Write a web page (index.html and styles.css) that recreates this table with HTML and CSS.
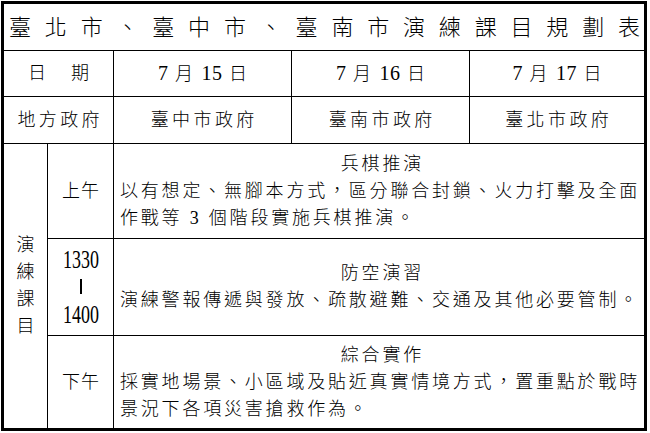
FILE: index.html
```html
<!DOCTYPE html>
<html lang="zh-Hant">
<head>
<meta charset="utf-8">
<title>臺北市、臺中市、臺南市演練課目規劃表</title>
<link rel="stylesheet" href="styles.css">
</head>
<body>
<div class="sheet">
  <div class="cell title span-all bb"><span class="title-text">臺北市、臺中市、臺南市演練課目規劃表</span></div>

  <div class="cell label span2 br bb">日　期</div>
  <div class="cell date br bb"><span><span class="num">7</span> 月 <span class="num">15</span> 日</span></div>
  <div class="cell date br bb"><span><span class="num">7</span> 月 <span class="num">16</span> 日</span></div>
  <div class="cell date bb"><span><span class="num">7</span> 月 <span class="num">17</span> 日</span></div>

  <div class="cell label span2 br bb">地方政府</div>
  <div class="cell label br bb">臺中市政府</div>
  <div class="cell label br bb">臺南市政府</div>
  <div class="cell label bb">臺北市政府</div>

  <div class="cell vert-cell br"><span class="vert">演練課目</span></div>

  <div class="cell time br bb">上午</div>
  <div class="cell content span3 bb">
    <p class="topic">兵棋推演</p>
    <p class="desc">以有想定、無腳本方式，區分聯合封鎖、火力打擊及全面作戰等 3 個階段實施兵棋推演。</p>
  </div>

  <div class="cell time br bb">
    <div class="clock">
      <span class="tall">1330</span>
      <span class="bar"></span>
      <span class="tall">1400</span>
    </div>
  </div>
  <div class="cell content span3 bb">
    <p class="topic">防空演習</p>
    <p class="desc">演練警報傳遞與發放、疏散避難、交通及其他必要管制。</p>
  </div>

  <div class="cell time br">下午</div>
  <div class="cell content span3">
    <p class="topic">綜合實作</p>
    <p class="desc">採實地場景、小區域及貼近真實情境方式，置重點於戰時景況下各項災害搶救作為。</p>
  </div>
</div>
</body>
</html>
```

FILE: styles.css
```css
* {
  box-sizing: border-box;
  margin: 0;
  padding: 0;
}

html, body {
  background: #fff;
}

body {
  margin: 1px 0 0 1px;
  font-family: "Liberation Serif", "Noto Sans CJK TC", serif;
  font-weight: 300;
  color: #000;
}

.sheet {
  width: 646px;
  height: 430px;
  border: 3px solid #000;
  display: grid;
  grid-template-columns: 44px 66px 178px 178px 174px;
  grid-template-rows: 47px 46px 47px 95px 97px 92px;
}

.cell {
  display: flex;
  align-items: center;
  justify-content: center;
  font-size: 18px;
  line-height: 27px;
}

.br { border-right: 1px solid #000; }
.bb { border-bottom: 1px solid #000; }

.span-all { grid-column: 1 / 6; }
.span2 { grid-column: 1 / 3; }
.span3 { grid-column: 3 / 6; }

.title {
  font-size: 22px;
  padding: 0 4px 0 5px;
}

.title-text {
  display: block;
  width: 100%;
  text-align: justify;
  text-align-last: justify;
  text-justify: inter-character;
}

.label {
  letter-spacing: 3.4px;
  padding-left: 3.4px;
}

.date {
  letter-spacing: 2px;
  padding-left: 2px;
  white-space: nowrap;
}

.num {
  font-size: 20px;
  letter-spacing: 0.5px;
}

.vert-cell {
  grid-column: 1;
  grid-row: 4 / 7;
}

.vert {
  display: block;
  width: 18px;
  line-height: 27px;
  text-align: center;
}

.time {
  letter-spacing: 1px;
  padding-left: 1px;
}

.clock {
  display: flex;
  flex-direction: column;
  align-items: center;
}

.tall {
  display: block;
  font-size: 25px;
  line-height: 27.5px;
  height: 27.5px;
  transform: scaleX(0.72);
  letter-spacing: 0;
}

.bar {
  display: block;
  width: 2px;
  height: 15px;
  margin: 6px 0 6.5px;
  background: #000;
}

.content {
  flex-direction: column;
  align-items: stretch;
  padding: 0 2px 0 6px;
  letter-spacing: 2.8px;
  text-spacing-trim: space-all;
}

.topic {
  text-align: center;
  padding-left: 2.8px;
}

.desc {
  text-align: left;
}
```
